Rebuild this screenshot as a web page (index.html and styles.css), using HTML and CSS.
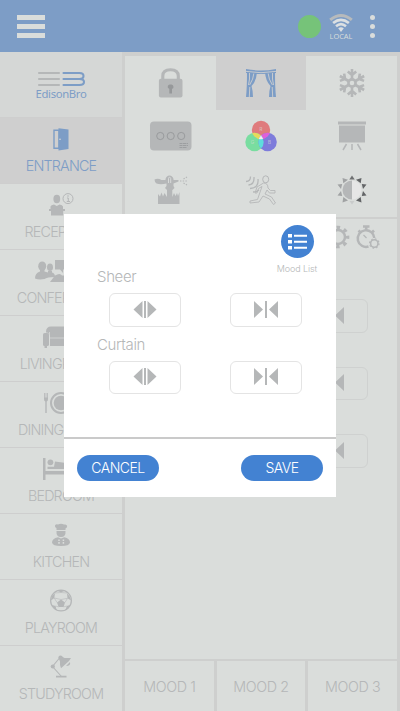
FILE: index.html
```html
<!DOCTYPE html>
<html lang="en">
<head>
<meta charset="utf-8">
<title>EdisonBro</title>
<link rel="stylesheet" href="styles.css">
</head>
<body>
<div class="app">
  <header class="topbar">
    <div class="menu"><i></i><i></i><i></i></div>
    <div class="status">
      <span class="online"></span>
      <div class="network">
        <svg width="24" height="18" viewBox="0 0 24 18" fill="none">
          <path d="M1.200 5.800Q12-2.800 22.800 5.800" fill="none" stroke="#b7babc" stroke-width="3"/>
          <path d="M4.100 9Q12 2.700 19.900 9" fill="none" stroke="#dce0e2" stroke-width="2.700"/>
          <path d="M7 12.300Q12 8 17 12.300" fill="none" stroke="#dce0e2" stroke-width="2.500"/>
          <path d="M9.200 14.200Q12 12.400 14.800 14.200L12 18Z" fill="#dce0e2"/>
        </svg>
        <span>LOCAL</span>
      </div>
      <div class="more"><i></i><i></i><i></i></div>
    </div>
  </header>
  <div class="body">
    <nav class="sidebar">
      <div class="brand">
        <svg width="50" height="16" viewBox="0 0 50 16" stroke-width="2.100" stroke-linecap="round">
          <path d="M3 2H23M3 8H23M3 14H23" fill="none" stroke="#b5b7b8"/>
          <path d="M27.500 2H43.500Q47.500 2 47.500 5T43.500 8Q48 8 48 11T43.500 14H27.500M27.500 8H43.500" fill="none" stroke="#7d9dc6"/>
        </svg>
        <span>EdisonBro</span>
      </div>
      <div class="room active">
        <svg class="ic" viewBox="0 0 44 26"><path d="M15 3.200H20V21.300H15Z" fill="none" stroke="currentColor" stroke-width="1.400"/><path d="M19.500 1.200 29.500 2.500V22L19.500 23.500Z"/><circle cx="21" cy="12.300" r=".8" fill="#dadddb"/></svg>
        <span>ENTRANCE</span>
      </div>
      <div class="room">
        <svg class="ic" viewBox="0 0 44 26"><ellipse cx="17.800" cy="6" rx="3.400" ry="4.200"/><path d="M11.500 16V13.500Q12 11.800 15 11.500L17.800 13 20.500 11.500Q23.500 11.800 24 13.500V16H26V18H24.200V22.500H12V18H10V16Z"/><circle cx="29" cy="5.600" r="5" fill="none" stroke="currentColor"/><path d="M28 5H29.300V8.500M27.800 8.500H31" fill="none" stroke="currentColor"/><circle cx="29" cy="3" r=".8"/></svg>
        <span>RECEPTION</span>
      </div>
      <div class="room">
        <svg class="ic" viewBox="0 0 44 26"><ellipse cx="3.200" cy="7.200" rx="4" ry="4.800"/><ellipse cx="11" cy="8.300" rx="3" ry="3.800"/><path d="M-4 19.500Q-4 14 1 12.500V11H5.500V12.500L9 13.500V12H13V13.500Q16 14 16 18Q8 18 5.500 20Q0 21 -4 19.500Z"/><path d="M16 1H35V10.500H24V14L21 10.500H16Z"/><path d="M16 16.500Q21 13.500 23 16.500H35V23H11Z"/></svg>
        <span>CONFERENCE</span>
      </div>
      <div class="room">
        <svg class="ic" viewBox="0 0 44 26"><path d="M7 7Q7 1.500 12 1.500H34Q37 1.500 37 7V21H11V13Q11 7.500 7 7.500Z"/><rect x="4" y="8" width="6" height="13" rx="1.600"/><path d="M5.500 20H8V23H5.500ZM34 20H38V23H34Z"/><path d="M10.500 7V21M10.500 13H36" fill="none" stroke="#dadddb" stroke-width=".7"/></svg>
        <span>LIVINGROOM</span>
      </div>
      <div class="room">
        <svg class="ic" viewBox="0 0 44 26"><circle cx="22" cy="12" r="10" fill="none" stroke="currentColor" stroke-width="2"/><circle cx="22" cy="12" r="7.300"/><path d="M5 2H5.800V6.500H6.600V2H7.400V6.500H8.200V2H9V8Q9 10 7.700 10.500V22H6.300V10.500Q5 10 5 8Z"/></svg>
        <span>DININGROOM</span>
      </div>
      <div class="room">
        <svg class="ic" viewBox="0 0 44 26"><path d="M4 1H6.500V14H35V22H32V17.500H6.500V23H4Z"/><circle cx="11.400" cy="5.300" r="2.900"/><path d="M16 4.500 27 6Q33 6 34 12H8.500V9.800H15Z"/></svg>
        <span>BEDROOM</span>
      </div>
      <div class="room">
        <svg class="ic" viewBox="0 0 44 26"><path d="M17.500 7V5.200Q15.500 4.500 16 2.600Q17 .8 19 1.600Q22 0 25 1.600Q27.500 .8 28.200 3Q28.300 5 26.500 5.400V7ZM17.500 8H26.500Q27 14 22 14T17.500 8Z"/><path d="M19 14.300 22 15.500 25.300 14.300Q31 15.500 31 19.500Q30.500 23 22 23T13 19.500Q13 15.600 19 14.300Z"/><path d="M20 16.500V21.500M24.400 16.500V21.500" fill="none" stroke="#dadddb" stroke-width="1.500" stroke-dasharray="1.600 1"/></svg>
        <span>KITCHEN</span>
      </div>
      <div class="room">
        <svg class="ic" viewBox="0 0 44 26"><circle cx="22" cy="11.500" r="10.400" fill="none" stroke="currentColor" stroke-width="1.200"/><path d="M22 10.500 26 13.500 24.600 17.900H19.600L18 13.500ZM18 1.500 22 3.500 26 1.500 24 1.100H20ZM28 4 31 8 32 11.500 28.500 9.300ZM16 4 12.600 7.500 12 11.500 15.300 9ZM13 16 16.500 17 17.600 21 15 19.300ZM31 16 27.800 17 26.500 21 29.500 19.300Z"/><path d="M15.300 9 18 13.500M28.500 9.300 26 13.500M19.600 17.900 16.500 17M24.600 17.900 27.800 17M22 3.500 28 4M22 3.500 16 4M15.300 9 22 10.500 28.500 9.300" fill="none" stroke="currentColor" stroke-width=".6"/></svg>
        <span>PLAYROOM</span>
      </div>
      <div class="room">
        <svg class="ic" viewBox="0 0 44 26"><path d="M20.500 3 13.500 11.500 22.500 21.500" fill="none" stroke="currentColor" stroke-width="1.100"/><circle cx="13.800" cy="11.500" r="2.100"/><circle cx="21.500" cy="2.500" r="2.100"/><path d="M17 20.700H27.500V22.500H17ZM22 1 25.500 3 32 3 30 6 22 13.200Q20.500 11 21 6.500L20 4Z"/><path d="M27 11 31 7Q32 11 27 11Z"/></svg>
        <span>STUDYROOM</span>
      </div>
    </nav>
    <main class="panel">
      <section class="devices">
        <div class="tile"><svg class="dv" viewBox="0 0 44 44"><path d="M13.800 19V15Q13.800 8.800 21.500 8.800T29.300 15V19" fill="none" stroke="currentColor" stroke-width="3.100"/><rect x="9.900" y="17.800" width="23.600" height="18.600" rx="2"/><path d="M21.700 23.600A2.300 2.300 0 0 1 23 28V32.500H20.300V28A2.300 2.300 0 0 1 21.700 23.600Z" fill="#96989a"/></svg></div>
        <div class="tile selected"><svg class="dv" viewBox="0 0 44 44"><path d="M7 8Q22 11 37 8V12Q22 14 7 12Z"/><path d="M8 11H18Q17.500 20 12.500 25Q14 30 14 36H7Q8 27 8 11ZM36 11H26Q26.500 20 31.500 25Q30 30 30 36H37Q36 27 36 11Z"/><path d="M7 10.400Q22 13 37 10.400M10.500 12Q11 18 9.500 24M14.800 12.500Q14.500 18 10.600 24M33.500 12Q33 18 34.500 24M29.200 12.500Q29.500 18 33.400 24M10.800 26 10.300 36M33.200 26 33.700 36" fill="none" stroke="#cfcfcf" stroke-width=".9"/></svg></div>
        <div class="tile"><svg class="dv" viewBox="0 0 44 44"><g fill="none" stroke="currentColor" stroke-width="2.600"><circle cx="22" cy="22" r="3.600"/><g id="arm"><path d="M22 18V8M17.800 10.500 22 14 26.200 10.500"/></g><use href="#arm" transform="rotate(60 22 22)"/><use href="#arm" transform="rotate(120 22 22)"/><use href="#arm" transform="rotate(180 22 22)"/><use href="#arm" transform="rotate(240 22 22)"/><use href="#arm" transform="rotate(300 22 22)"/></g></svg></div>
        <div class="tile"><svg class="dv" viewBox="0 0 44 44"><rect x="1" y="7.500" width="41.500" height="29" rx="4"/><g fill="none" stroke="#999b9d"><circle cx="11.300" cy="22" r="3.600"/><circle cx="21.700" cy="22" r="3.600"/><circle cx="32.200" cy="22" r="3.600"/><path d="M30.500 29.500H39M30.500 31.500H39M30.500 33.500H38" stroke-dasharray="3 .5" stroke-width=".9"/></g></svg></div>
        <div class="tile"><svg class="dv" viewBox="0 0 44 44"><defs><clipPath id="cr"><circle cx="22" cy="16" r="9.200"/></clipPath><clipPath id="cg"><circle cx="15.500" cy="28" r="9.200"/></clipPath></defs><circle cx="22" cy="16" r="9.200" fill="#df7b7d"/><circle cx="15.500" cy="28" r="9.200" fill="#79dda0"/><circle cx="28.600" cy="28" r="9.200" fill="#7e7cdb"/><circle cx="15.500" cy="28" r="9.200" fill="#e6db5c" clip-path="url(#cr)"/><circle cx="28.600" cy="28" r="9.200" fill="#df60da" clip-path="url(#cr)"/><g clip-path="url(#cg)"><circle cx="28.600" cy="28" r="9.200" fill="#5edddd"/><circle cx="28.600" cy="28" r="9.200" fill="#f0eeee" clip-path="url(#cr)"/></g><g class="rgb"><text x="22" y="17">R</text><text x="13.500" y="30">G</text><text x="30.500" y="30">B</text></g></svg></div>
        <div class="tile"><svg class="dv" viewBox="0 0 44 44"><path d="M8 7.500H36V10.500H8ZM9 11.500H35V28.500H9Z"/><path d="M16.500 30 13 36M22 30V36M27.500 30 31 36" fill="none" stroke="currentColor" stroke-width="1.500"/></svg></div>
        <div class="tile"><svg class="dv" viewBox="0 0 44 44"><path d="M5.500 11.500Q9 10 12.500 12H16.500V11Q17.500 7.500 20.500 7.500T24.500 11V12H29.500V13.500L24.500 15.500V18L25.500 20 23.500 22H23.300V29L25 25 26.500 28 28 25 29 28 30.500 24V36H9V26L11 28.500 12.500 24.500 14 28.500 15.500 25 18 29V22L16 20 17.500 18V15.500Q11.500 17 7.500 15.500Q5.500 14 5.500 11.500Z"/><path d="M19.500 15V10.500Q19.500 9.300 20.500 9.300T21.700 10.500V15" fill="none" stroke="#dadddb" stroke-width=".9"/><path d="M31 13H39M34.500 11 38 9M34.500 15 38 17" fill="none" stroke="currentColor" stroke-width="1.200" stroke-dasharray="1.400 1.300"/></svg></div>
        <div class="tile"><svg class="dv" viewBox="0 0 44 44"><g fill="none" stroke="currentColor"><path d="M7 13.500Q11.500 13.500 11.500 8.500M9.500 17Q15.500 16.500 15 9M11 20.500Q20 20 19 11M14 24Q18 24 20 22" stroke-width="1.300"/><ellipse cx="26.700" cy="11.300" rx="3" ry="3.500"/><path d="M24.500 15Q29 15 29 20L31.500 22.500H36V25H30.500L28 22 26 26 32.500 29 36.500 35 34.500 36.500 30.500 31 24 28 20 34 11 35V33L18.500 31.500 23 18.500 19.500 20.500 18 25H16L18 19Z" stroke-width=".9"/></g></svg></div>
        <div class="tile"><svg class="dv" viewBox="0 0 44 44"><path d="M22 12.500A9.500 9.500 0 0 0 22 31.500Z"/><path d="M22 12.500A9.500 9.500 0 0 1 22 31.500Z" fill="#e6e6e6"/><path d="M19.300 11.500 22 7.500 24.700 11.500Z" fill="#6e7071"/><path d="M26 11.800 31.500 10 30.700 15.300ZM31.800 16 36.500 16.500 33 21ZM33 23 36.500 27.500 31.800 28ZM30.700 29 31.500 34.500 26 32.500Z" fill="#626466"/><path d="M18 11.800 12.500 10 13.300 15.300ZM12.200 16 7.500 16.500 11 21ZM11 23 7.500 27.500 12.200 28ZM13.300 29 12.500 34.500 18 32.500Z" fill="#a1a3a4"/><path d="M19.500 33 22 36.500 24.500 33Z" fill="#c9cbcb"/></svg></div>
      </section>
      <section class="control">
        <div class="tools">
          <svg width="24" height="26" viewBox="0 0 24 26"><circle cx="12" cy="13" r="7" fill="none" stroke="currentColor" stroke-width="2.500"/><circle cx="12" cy="13" r="9.600" fill="none" stroke="currentColor" stroke-width="3.500" stroke-dasharray="3.500 4.040" stroke-dashoffset="1.700"/></svg>
          <svg width="24" height="26" viewBox="0 0 24 26"><g fill="none" stroke="currentColor"><path d="M12.500 22.500A8.300 8.300 0 1 1 18.300 14" stroke-width="2.500"/><path d="M7 2.500H13.500M10.200 2.500V6M2.500 6.500 4.500 8.500M18 6.500 16 8.500" stroke-width="2.600"/><path d="M7.500 11 10.500 14" stroke-width="1.300"/><circle cx="18.300" cy="19.500" r="3.700" stroke-width="1.600"/><circle cx="18.300" cy="19.500" r="4.700" stroke-width="1.200" stroke-dasharray="1.600 2.090"/></g></svg>
        </div>
        <div class="ghosts">
          <div class="ghost"><svg width="24" height="18" viewBox="0 0 24 18"><path d="M0 0 9 8.500 0 17ZM11 0H13V17H11ZM24 0V17L15 8.500Z"/></svg></div>
          <div class="ghost"><svg width="24" height="18" viewBox="0 0 24 18"><path d="M0 0 9 8.500 0 17ZM11 0H13V17H11ZM24 0V17L15 8.500Z"/></svg></div>
          <div class="ghost"><svg width="24" height="18" viewBox="0 0 24 18"><path d="M0 0 9 8.500 0 17ZM11 0H13V17H11ZM24 0V17L15 8.500Z"/></svg></div>
        </div>
      </section>
      <footer class="moods"><div>MOOD 1</div><div>MOOD 2</div><div>MOOD 3</div></footer>
    </main>
  </div>
  <div class="dialog">
    <div class="dialog-main">
      <div class="mood-list">
        <svg width="33" height="33" viewBox="0 0 33 33"><circle cx="16.500" cy="16.500" r="16.500" fill="#4382d2"/><path d="M7 9H11V12.500H7ZM7 15H11V18.500H7ZM7 21H11V24.500H7ZM13 9.700H26V11.700H13ZM13 15.700H26V17.700H13ZM13 21.700H26V23.700H13Z" fill="#fff"/></svg>
        <span>Mood List</span>
      </div>
      <div class="group">
        <h2>Sheer</h2>
        <div class="pair">
          <button class="key"><svg width="24" height="18" viewBox="0 0 24 18"><path d="M9.500 0V17L.5 8.500ZM11 0H13V17H11ZM14.500 0V17L23.500 8.500Z"/></svg></button>
          <button class="key"><svg width="24" height="18" viewBox="0 0 24 18"><path d="M0 0 9 8.500 0 17ZM11 0H13V17H11ZM24 0V17L15 8.500Z"/></svg></button>
        </div>
      </div>
      <div class="group">
        <h2>Curtain</h2>
        <div class="pair">
          <button class="key"><svg width="24" height="18" viewBox="0 0 24 18"><path d="M9.500 0V17L.5 8.500ZM11 0H13V17H11ZM14.500 0V17L23.500 8.500Z"/></svg></button>
          <button class="key"><svg width="24" height="18" viewBox="0 0 24 18"><path d="M0 0 9 8.500 0 17ZM11 0H13V17H11ZM24 0V17L15 8.500Z"/></svg></button>
        </div>
      </div>
    </div>
    <div class="actions"><button>CANCEL</button><button>SAVE</button></div>
  </div>
</div>
</body>
</html>
```

FILE: styles.css
```css
* { box-sizing: border-box; }
body { margin: 0; font-family: Inter, "Liberation Sans", sans-serif; font-weight: 300; color: #b5b7b8; }
svg { display: block; fill: currentColor; overflow: visible; flex: none; }
button { font: inherit; color: inherit; padding: 0; border: 0; }
.app { position: relative; width: 400px; height: 711px; overflow: hidden; display: flex; flex-direction: column; background: #cecfce; }

.topbar { height: 52px; flex: none; background: #7d9dc6; display: flex; justify-content: space-between; padding: 0 25px 0 17px; align-items: center; }
.menu { display: flex; flex-direction: column; gap: 4.500px; padding-top: 1px; }
.menu i { width: 28px; height: 4.700px; background: #dadddb; }
.status { display: flex; align-items: center; }
.online { width: 23px; height: 23px; border-radius: 50%; background: #76c379; margin-right: 8px; }
.network { width: 24px; display: flex; flex-direction: column; align-items: center; margin-right: 17px; padding-top: 1px; }
.network span { font: 400 7.400px/8px "Open Sans", sans-serif; color: #dadddb; }
.more { display: flex; flex-direction: column; gap: 4px; }
.more i { width: 5px; height: 5px; border-radius: 50%; background: #dadddb; }

.body { flex: 1; display: flex; min-height: 0; }
.sidebar { width: 122px; flex: none; }
.brand { height: 66px; background: #d5d7d6; border-bottom: 1px solid #cecece; display: flex; flex-direction: column; align-items: center; padding-top: 19px; }
.brand span { font: 400 11.300px/16px "Noto Sans", sans-serif; color: #7d9dc6; letter-spacing: -.35px; margin-top: -1px; }
.room { height: 66px; background: #dadddb; border-bottom: 1px solid #cecece; display: flex; flex-direction: column; align-items: center; padding-top: 9px; }
.room.active { background: #cfcfcf; color: #7d9dc6; }
.ic { width: 44px; height: 26px; }
.room span { font-size: 14.300px; line-height: 20px; margin-top: 3px; letter-spacing: -.8px; white-space: nowrap; }
.panel { margin-left: 3px; width: 272px; padding-top: 4px; display: flex; flex-direction: column; }
.devices { height: 161px; flex: none; display: grid; grid-template-columns: 91px 90px 91px; grid-template-rows: 53.500px 53.500px 54px; background: #dadddb; }
.tile { display: flex; align-items: center; justify-content: center; }
.tile.selected { background: #cfcfcf; color: #7d9dc6; }
.dv { width: 44px; height: 44px; }
.rgb { fill: #dadddb; font-size: 4.500px; text-anchor: middle; }
.control { flex: 1; margin: 2px 0; background: #dadddb; }
.tools { display: flex; gap: 6px; justify-content: flex-end; padding: 5px 17px 0 0; }
.ghosts { display: flex; flex-direction: column; align-items: flex-end; gap: 34px; padding: 49px 29px 0 0; }
.ghost { width: 72px; height: 33.500px; border: 1px solid #cfd1d0; border-radius: 6px; display: flex; align-items: center; justify-content: center; }
.moods { height: 50px; flex: none; display: grid; grid-template-columns: repeat(3, 1fr); gap: 3px; }
.moods div { background: #dadddb; display: flex; align-items: center; justify-content: center; font-size: 14.300px; letter-spacing: -.4px; }

.dialog { position: absolute; left: 64px; top: 214px; width: 272px; height: 283px; background: #fff; display: flex; flex-direction: column; }
.dialog-main { height: 225px; border-bottom: 2px solid #cacaca; padding-top: 11px; }
.mood-list { display: flex; flex-direction: column; align-items: center; width: 50px; margin-left: 208px; height: 40px; white-space: nowrap; }
.mood-list span { font-size: 9px; line-height: 12px; letter-spacing: -.1px; margin-top: 5px; }
h2 { margin: 0 0 0 33px; font-size: 15px; font-weight: 300; line-height: 20px; letter-spacing: -.35px; }
.group { height: 67.500px; padding-top: 2px; }
.pair { display: flex; gap: 49px; padding: 6px 0 0 45px; }
.key { width: 72px; height: 33.500px; border: 1px solid #e4e4e4; border-radius: 6px; background: #fff; display: flex; align-items: center; justify-content: center; }
.actions { display: flex; justify-content: space-between; padding: 16px 13px 0; }
.actions button { width: 82px; height: 26px; padding-bottom: 1px; border-radius: 13px; background: #4382d2; color: #fff; font-size: 14px; letter-spacing: -.5px; }
```
